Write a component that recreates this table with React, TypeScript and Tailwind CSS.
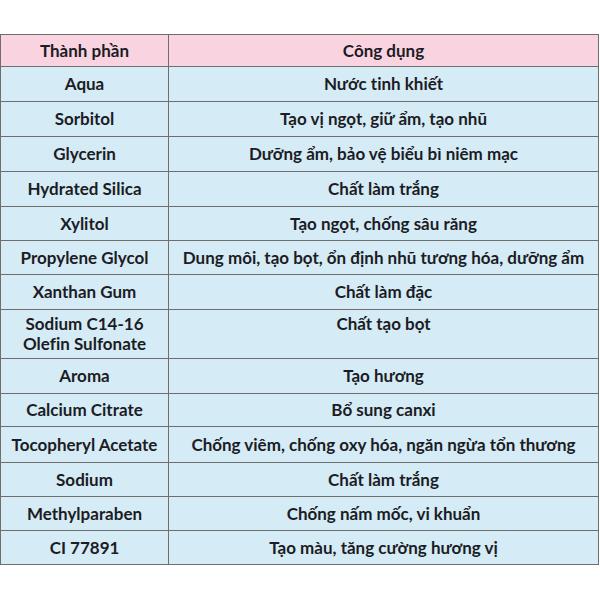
const rows: { name: string[]; use: string; h: string }[] = [
  { name: ['Aqua'], use: 'Nước tinh khiết', h: 'h-[35px]' },
  { name: ['Sorbitol'], use: 'Tạo vị ngọt, giữ ẩm, tạo nhũ', h: 'h-[35px]' },
  { name: ['Glycerin'], use: 'Dưỡng ẩm, bảo vệ biểu bì niêm mạc', h: 'h-[35px]' },
  { name: ['Hydrated Silica'], use: 'Chất làm trắng', h: 'h-[35px]' },
  { name: ['Xylitol'], use: 'Tạo ngọt, chống sâu răng', h: 'h-[34px]' },
  { name: ['Propylene Glycol'], use: 'Dung môi, tạo bọt, ổn định nhũ tương hóa, dưỡng ẩm', h: 'h-[34px]' },
  { name: ['Xanthan Gum'], use: 'Chất làm đặc', h: 'h-[35px]' },
  { name: ['Sodium C14-16', 'Olefin Sulfonate'], use: 'Chất tạo bọt', h: 'h-[49px]' },
  { name: ['Aroma'], use: 'Tạo hương', h: 'h-[35px]' },
  { name: ['Calcium Citrate'], use: 'Bổ sung canxi', h: 'h-[33px]' },
  { name: ['Tocopheryl Acetate'], use: 'Chống viêm, chống oxy hóa, ngăn ngừa tổn thương', h: 'h-[36px]' },
  { name: ['Sodium'], use: 'Chất làm trắng', h: 'h-[34px]' },
  { name: ['Methylparaben'], use: 'Chống nấm mốc, vi khuẩn', h: 'h-[34px]' },
  { name: ['CI 77891'], use: 'Tạo màu, tăng cường hương vị', h: 'h-[34px]' },
];

export default function App() {
  return (
    <div className="w-[600px] h-[600px] bg-white pt-[34px]" style={{ fontFamily: 'Lato, "Open Sans", sans-serif' }}>
      <table className="w-[599px] border-collapse text-[17px] font-bold text-[#1c1c24] leading-[20px] [font-variant-ligatures:none]">
        <thead>
          <tr className="h-[32px] bg-[#f9d3df]">
            <th className="w-[168px] border border-[#6e6e6e] text-center align-middle font-bold">Thành phần</th>
            <th className="border border-[#6e6e6e] text-center align-middle font-bold">Công dụng</th>
          </tr>
        </thead>
        <tbody>
          {rows.map((r) => {
            const twoLine = r.name.length > 1;
            return (
              <tr key={r.name.join(' ')} className={`${r.h} bg-[#d5ebf6]`}>
                <td className="border border-[#6e6e6e] px-1 text-center align-middle">
                  {r.name.map((line) => (
                    <div key={line}>{line}</div>
                  ))}
                </td>
                <td
                  className={
                    twoLine
                      ? 'border border-[#6e6e6e] px-1 pt-[4px] text-center align-top'
                      : 'border border-[#6e6e6e] px-1 text-center align-middle'
                  }
                >
                  {r.use}
                </td>
              </tr>
            );
          })}
        </tbody>
      </table>
    </div>
  );
}
